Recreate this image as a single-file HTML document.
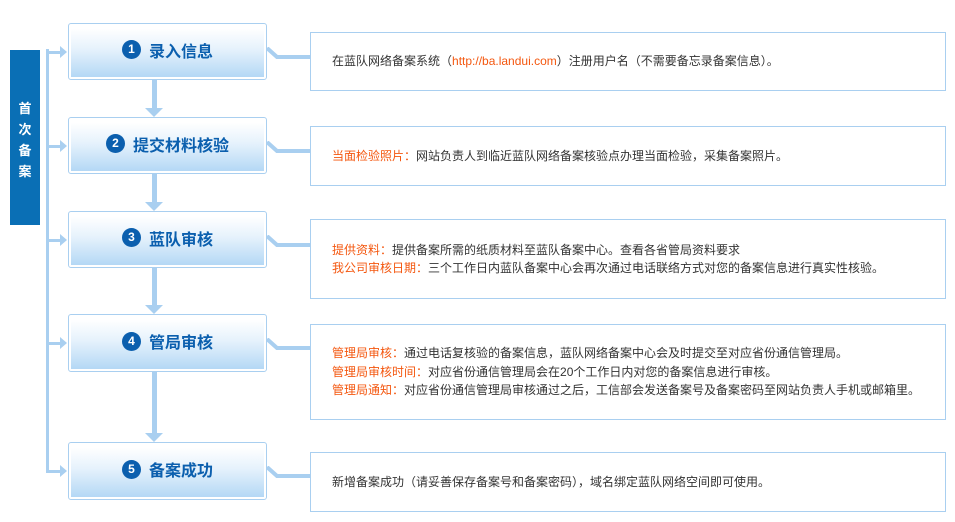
<!DOCTYPE html>
<html><head><meta charset="utf-8"><style>
*{margin:0;padding:0;box-sizing:border-box}
body{width:955px;height:522px;background:#fff;position:relative;overflow:hidden;font-family:"Liberation Sans","Noto Sans CJK SC",sans-serif}
.side{position:absolute;left:10px;top:50px;width:30px;height:175px;background:#0a6fb5;color:#fff;font-weight:bold;font-size:13px;text-align:center;padding-top:48px;line-height:21px}
.vl{position:absolute;left:46px;top:49px;width:3px;height:424px;background:#a9cff0}
.ha{position:absolute;left:46px;height:3px;width:16px;background:#a9cff0}
.ha:after{content:"";position:absolute;left:14px;top:-5px;border-left:7px solid #a9cff0;border-top:6.5px solid transparent;border-bottom:6.5px solid transparent}
.step{position:absolute;left:68px;width:199px;border:1px solid #a9cff0;border-radius:3px;background:#fff;padding:2px}
.step .in{height:100%;background:linear-gradient(#ffffff 5%,#e6f2fc 45%,#b4d8f5);display:flex;align-items:center;justify-content:center;color:#0b5fae;font-weight:bold;font-size:16px;padding-bottom:4px}
.num{display:inline-block;width:19px;height:19px;border-radius:50%;background:#0b5fae;color:#fff;font-size:12px;line-height:19px;text-align:center;margin-right:8px}
.da{position:absolute;left:152px;width:5px;background:#a9cff0}
.da:after{content:"";position:absolute;left:-7px;bottom:-9px;border-top:9px solid #a9cff0;border-left:9.5px solid transparent;border-right:9.5px solid transparent}
.det{position:absolute;left:310px;width:636px;border:1px solid #a9cff0;display:flex;flex-direction:column;justify-content:center;padding-left:21px;font-size:12px;color:#333;line-height:18.5px}
.o{color:#f4570f}
.cn{position:absolute;left:267px;width:44px;height:14px}
</style></head><body>
<div class="side">首<br>次<br>备<br>案</div>
<div class="vl"></div>
<div class="ha" style="top:51px"></div>
<div class="ha" style="top:145px"></div>
<div class="ha" style="top:239px"></div>
<div class="ha" style="top:342px"></div>
<div class="ha" style="top:470px"></div>

<div class="step" style="top:23px;height:57px"><div class="in"><span class="num">1</span>录入信息</div></div>
<div class="step" style="top:117px;height:57px"><div class="in"><span class="num">2</span>提交材料核验</div></div>
<div class="step" style="top:211px;height:57px"><div class="in"><span class="num">3</span>蓝队审核</div></div>
<div class="step" style="top:314px;height:58px"><div class="in"><span class="num">4</span>管局审核</div></div>
<div class="step" style="top:442px;height:58px"><div class="in"><span class="num">5</span>备案成功</div></div>

<div class="da" style="top:80px;height:28px"></div>
<div class="da" style="top:174px;height:28px"></div>
<div class="da" style="top:268px;height:37px"></div>
<div class="da" style="top:372px;height:61px"></div>

<svg class="cn" style="top:47px" viewBox="0 0 44 14"><path d="M0 1 L10 10 H44" stroke="#a9cff0" stroke-width="4" fill="none"/></svg>
<svg class="cn" style="top:141px" viewBox="0 0 44 14"><path d="M0 1 L10 10 H44" stroke="#a9cff0" stroke-width="4" fill="none"/></svg>
<svg class="cn" style="top:235px" viewBox="0 0 44 14"><path d="M0 1 L10 10 H44" stroke="#a9cff0" stroke-width="4" fill="none"/></svg>
<svg class="cn" style="top:338px" viewBox="0 0 44 14"><path d="M0 1 L10 10 H44" stroke="#a9cff0" stroke-width="4" fill="none"/></svg>
<svg class="cn" style="top:466px" viewBox="0 0 44 14"><path d="M0 1 L10 10 H44" stroke="#a9cff0" stroke-width="4" fill="none"/></svg>

<div class="det" style="top:32px;height:59px"><div>在蓝队网络备案系统（<span class="o">http://ba.landui.com</span>）注册用户名（不需要备忘录备案信息）。</div></div>
<div class="det" style="top:126px;height:60px"><div><span class="o">当面检验照片：</span>网站负责人到临近蓝队网络备案核验点办理当面检验，采集备案照片。</div></div>
<div class="det" style="top:219px;height:80px"><div><span class="o">提供资料：</span>提供备案所需的纸质材料至蓝队备案中心。查看各省管局资料要求</div><div><span class="o">我公司审核日期：</span>三个工作日内蓝队备案中心会再次通过电话联络方式对您的备案信息进行真实性核验。</div></div>
<div class="det" style="top:324px;height:96px"><div><span class="o">管理局审核：</span>通过电话复核验的备案信息，蓝队网络备案中心会及时提交至对应省份通信管理局。</div><div><span class="o">管理局审核时间：</span>对应省份通信管理局会在20个工作日内对您的备案信息进行审核。</div><div><span class="o">管理局通知：</span>对应省份通信管理局审核通过之后，工信部会发送备案号及备案密码至网站负责人手机或邮箱里。</div></div>
<div class="det" style="top:452px;height:60px"><div>新增备案成功（请妥善保存备案号和备案密码），域名绑定蓝队网络空间即可使用。</div></div>
</body></html>
